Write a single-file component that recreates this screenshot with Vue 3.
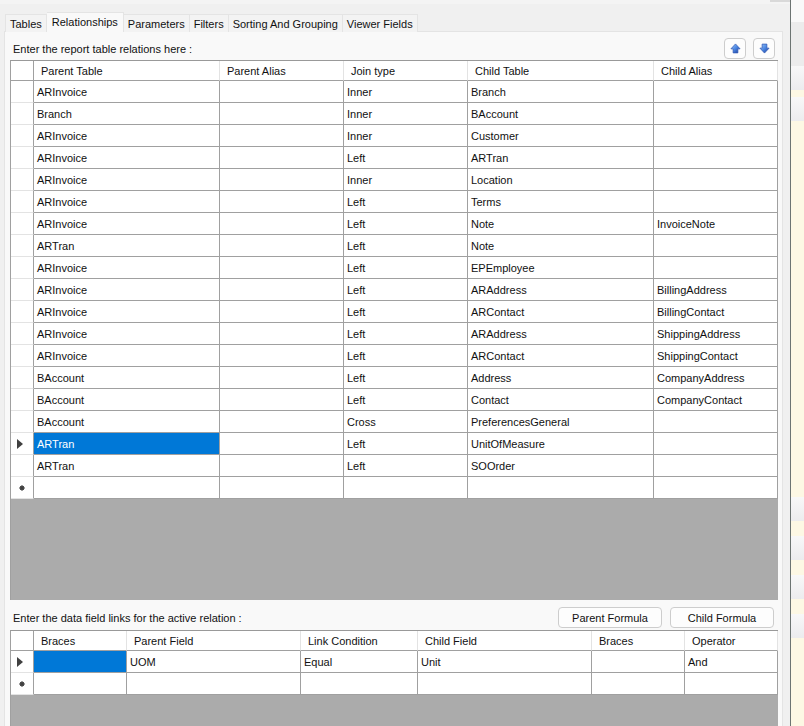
<script setup>
import { ref } from 'vue'

const tabs = ['Tables', 'Relationships', 'Parameters', 'Filters', 'Sorting And Grouping', 'Viewer Fields']
const activeTab = ref('Relationships')

const relationColumns = ['Parent Table', 'Parent Alias', 'Join type', 'Child Table', 'Child Alias']
const relations = [
  ['ARInvoice', '', 'Inner', 'Branch', ''],
  ['Branch', '', 'Inner', 'BAccount', ''],
  ['ARInvoice', '', 'Inner', 'Customer', ''],
  ['ARInvoice', '', 'Left', 'ARTran', ''],
  ['ARInvoice', '', 'Inner', 'Location', ''],
  ['ARInvoice', '', 'Left', 'Terms', ''],
  ['ARInvoice', '', 'Left', 'Note', 'InvoiceNote'],
  ['ARTran', '', 'Left', 'Note', ''],
  ['ARInvoice', '', 'Left', 'EPEmployee', ''],
  ['ARInvoice', '', 'Left', 'ARAddress', 'BillingAddress'],
  ['ARInvoice', '', 'Left', 'ARContact', 'BillingContact'],
  ['ARInvoice', '', 'Left', 'ARAddress', 'ShippingAddress'],
  ['ARInvoice', '', 'Left', 'ARContact', 'ShippingContact'],
  ['BAccount', '', 'Left', 'Address', 'CompanyAddress'],
  ['BAccount', '', 'Left', 'Contact', 'CompanyContact'],
  ['BAccount', '', 'Cross', 'PreferencesGeneral', ''],
  ['ARTran', '', 'Left', 'UnitOfMeasure', ''],
  ['ARTran', '', 'Left', 'SOOrder', ''],
]
const activeRelation = ref(16)

const linkColumns = ['Braces', 'Parent Field', 'Link Condition', 'Child Field', 'Braces', 'Operator']
const links = [['', 'UOM', 'Equal', 'Unit', '', 'And']]
const activeLink = ref(0)
</script>

<template>
  <div class="desktop">
    <main class="window">
      <div class="top-strip"><span class="top-mark"></span></div>
      <div class="tabs" role="tablist">
        <button
          v-for="tab in tabs"
          :key="tab"
          type="button"
          role="tab"
          class="tab"
          :class="{ active: tab === activeTab }"
          :aria-selected="tab === activeTab"
          @click="activeTab = tab"
        >{{ tab }}</button>
      </div>

      <section class="panel">
        <div class="caption first">
          <span>Enter the report table relations here :</span>
          <div class="actions">
            <button type="button" class="button square" aria-label="Move up">
              <svg width="11" height="11" viewBox="0 0 12 12">
                <defs>
                  <linearGradient id="blue" x1="0" y1="0" x2="1" y2="1">
                    <stop offset="0" stop-color="#9cc8f8" />
                    <stop offset="0.5" stop-color="#4a86e2" />
                    <stop offset="1" stop-color="#1a3690" />
                  </linearGradient>
                </defs>
                <path d="M6 1 11 6.4H8.6v4.4H3.4V6.4H1z" fill="url(#blue)" stroke="#3158b5" stroke-width=".8" />
              </svg>
            </button>
            <button type="button" class="button square" aria-label="Move down">
              <svg width="11" height="11" viewBox="0 0 12 12">
                <path d="M6 11 1 5.6h2.4V1.2h5.2v4.4H11z" fill="url(#blue)" stroke="#3158b5" stroke-width=".8" />
              </svg>
            </button>
          </div>
        </div>

        <div class="grid relations">
          <table>
            <colgroup>
              <col class="w-marker" /><col class="w-wide" /><col class="w-mid" />
              <col class="w-mid" /><col class="w-wide" /><col class="w-mid" />
            </colgroup>
            <thead>
              <tr>
                <td class="corner"></td>
                <th v-for="name in relationColumns" :key="name" scope="col">{{ name }}</th>
              </tr>
            </thead>
            <tbody>
              <tr v-for="(row, r) in relations" :key="r" @click="activeRelation = r">
                <td class="marker">
                  <svg v-if="r === activeRelation" width="6" height="10" viewBox="0 0 6 10"><path d="M0 0v10l6-5z" /></svg>
                </td>
                <td v-for="(value, c) in row" :key="c" :class="{ selected: r === activeRelation && c === 0 }">{{ value }}</td>
              </tr>
              <tr>
                <td class="marker new">
                  <svg width="6" height="6" viewBox="0 0 6 6"><circle cx="3" cy="3" r="2" /><path d="M3 0v6M0 3h6M1 1l4 4M5 1 1 5" /></svg>
                </td>
                <td v-for="name in relationColumns" :key="name"></td>
              </tr>
            </tbody>
          </table>
        </div>

        <div class="caption second">
          <span>Enter the data field links for the active relation :</span>
          <div class="actions">
            <button type="button" class="button formula">Parent Formula</button>
            <button type="button" class="button formula">Child Formula</button>
          </div>
        </div>

        <div class="grid links">
          <table>
            <colgroup>
              <col class="w-marker" /><col class="w-brace" /><col class="w-field" />
              <col class="w-condition" /><col class="w-field" /><col class="w-brace" /><col class="w-brace" />
            </colgroup>
            <thead>
              <tr>
                <td class="corner"></td>
                <th v-for="(name, c) in linkColumns" :key="c" scope="col">{{ name }}</th>
              </tr>
            </thead>
            <tbody>
              <tr v-for="(row, r) in links" :key="r" @click="activeLink = r">
                <td class="marker">
                  <svg v-if="r === activeLink" width="6" height="10" viewBox="0 0 6 10"><path d="M0 0v10l6-5z" /></svg>
                </td>
                <td v-for="(value, c) in row" :key="c" :class="{ selected: r === activeLink && c === 0 }">{{ value }}</td>
              </tr>
              <tr>
                <td class="marker new">
                  <svg width="6" height="6" viewBox="0 0 6 6"><circle cx="3" cy="3" r="2" /><path d="M3 0v6M0 3h6M1 1l4 4M5 1 1 5" /></svg>
                </td>
                <td v-for="(name, c) in linkColumns" :key="c"></td>
              </tr>
            </tbody>
          </table>
        </div>
      </section>
    </main>

    <aside class="behind">
      <div class="title"></div>
      <div class="toolbar"></div>
      <div class="band"></div>
      <div class="gap small"></div>
      <div class="band"></div>
      <div class="gap large"></div>
      <div class="band"></div>
      <div class="gap"></div>
      <div class="band"></div>
      <div class="gap"></div>
      <div class="band"></div>
      <div class="gap"></div>
      <div class="band"></div>
    </aside>
  </div>
</template>

<style>
body {
  margin: 0;
}
</style>

<style scoped>
.desktop {
  display: flex;
  min-height: 100vh;
  box-sizing: border-box;
  font-family: "Liberation Sans", Arial, sans-serif;
  font-size: 11px;
  line-height: 14px;
  color: #111;
  background: #fdf8e4;
}
.window {
  flex: 1;
  min-width: 0;
  display: flex;
  flex-direction: column;
  background: #f0f0f0;
  border-right: 1px solid #6c7472;
}
.top-strip {
  display: flex;
  justify-content: flex-end;
  height: 4px;
  margin-bottom: 8px;
  background: #f4f4f4;
}
.top-mark {
  width: 20px;
  height: 2px;
  background: #d9d9d9;
}
.tabs {
  display: flex;
  align-items: flex-end;
  height: 20px;
  margin-bottom: -1px;
  padding-left: 5px;
  z-index: 1;
}
.tab {
  height: 18px;
  margin: 0;
  padding: 0 4px;
  border: 1px solid #e4e4e4;
  border-width: 1px 1px 0 0;
  background: #f3f3f3;
  font: inherit;
  color: inherit;
  white-space: nowrap;
}
.tab:first-child {
  border-left-width: 1px;
}
.tab.active {
  height: 20px;
  padding: 0 5px 2px;
  background: #f9f9f9;
}
.panel {
  flex: 1;
  display: flex;
  flex-direction: column;
  margin: 0 7px 0 4px;
  padding: 0 4px 0 5px;
  border: 1px solid #e4e4e4;
  border-width: 1px 1px 0 1px;
  background: #f9f9f9;
}
.caption {
  display: flex;
  align-items: center;
  justify-content: space-between;
  box-sizing: border-box;
  padding: 5px 4px 0 3px;
}
.caption.first {
  height: 28px;
  padding-right: 3px;
}
.caption.second {
  height: 30px;
}
.actions {
  display: flex;
  gap: 8px;
}
.first .actions {
  gap: 7px;
}
.button {
  display: flex;
  align-items: center;
  justify-content: center;
  box-sizing: border-box;
  height: 21px;
  margin: 0;
  padding: 0;
  border: 1px solid #cdcdcd;
  border-radius: 4px;
  background: #fdfdfd;
  font: inherit;
  color: inherit;
}
.square {
  width: 22px;
}
.formula {
  width: 104px;
}
.grid {
  border-top: 1px solid #999;
  border-left: 1px solid #a0a0a0;
  background: #ababab;
}
.relations {
  flex: 1;
}
.links {
  height: 96px;
  box-sizing: border-box;
}
table {
  width: 100%;
  table-layout: fixed;
  border-collapse: separate;
  border-spacing: 0;
  background: #fff;
}
.w-marker { width: 23px; }
.w-wide { width: 186px; }
.w-mid { width: 124px; }
.w-brace { width: 93px; }
.w-field { width: 174px; }
.w-condition { width: 117px; }
th,
td {
  box-sizing: border-box;
  height: 22px;
  padding: 0 3px;
  border: solid #a0a0a0;
  border-width: 0 1px 1px 0;
  text-align: left;
  font-weight: 400;
  white-space: nowrap;
  overflow: hidden;
}
th,
.corner {
  height: 20px;
  padding: 0 7px;
}
th {
  border-right-color: #e3e3e3;
}
.marker {
  padding: 0 0 0 6px;
  border-bottom-color: #e3e3e3;
}
.marker.new {
  padding-left: 8px;
}
.marker svg {
  display: block;
  fill: #404040;
}
.marker.new svg {
  stroke: #404040;
  stroke-width: 0.7;
}
.selected {
  background: #0078d7;
  color: #fff;
}
.behind {
  width: 13px;
  flex: none;
}
.title {
  height: 22px;
  background: #f9f9f9;
}
.toolbar {
  height: 44px;
  background: #ececec;
}
.band {
  height: 24px;
  background: linear-gradient(#f8f8f8, #ececee);
}
.gap {
  height: 15px;
}
.gap.small {
  height: 7px;
}
.gap.large {
  height: 376px;
}
</style>
